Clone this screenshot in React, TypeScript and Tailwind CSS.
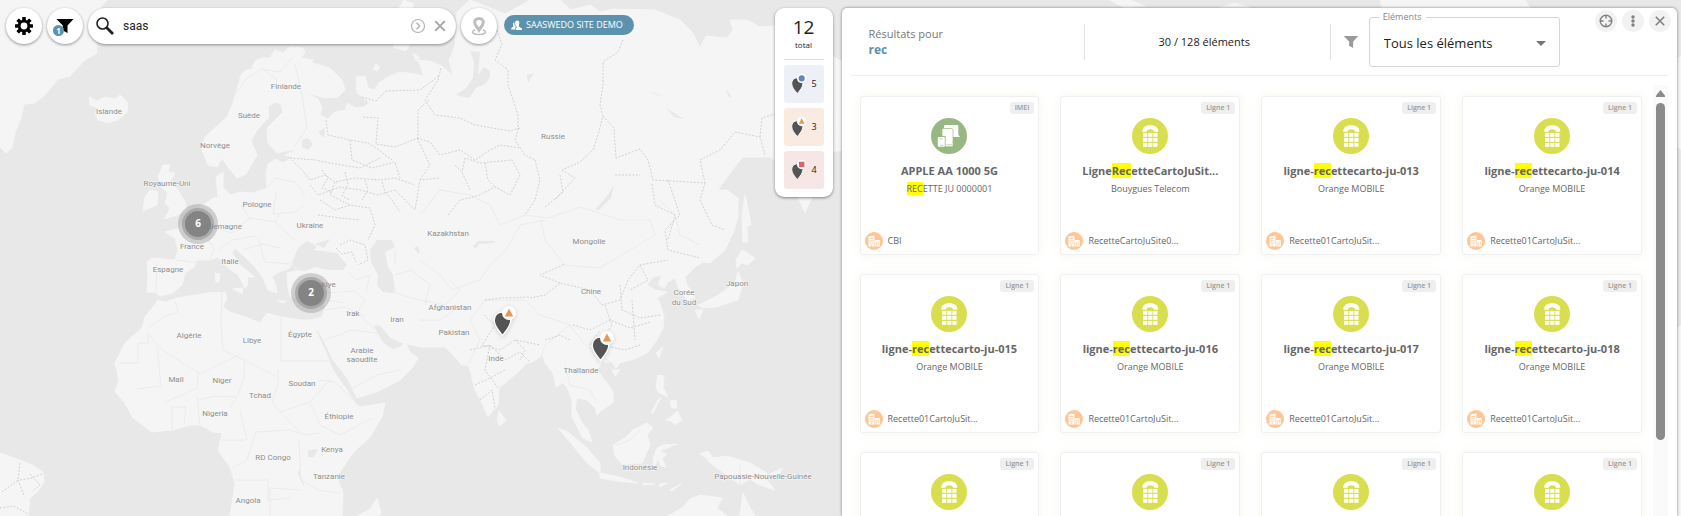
import React, { useState } from 'react';

const LAND = [
  // Greenland
  'M0 0L107 0L100 8L96 20L97 53L85 60L70 76L58 79L45 95L35 103L24 104L21 118L15 133L12 148L6 153L0 147Z',
  // Iceland
  'M89 97L97 101L105 97L115 99L120 95L128 103L127 112L118 120L108 123L98 120L95 113L99 108L90 105Z',
  // Eurasia
  'M241 75L246 70L252 69L255 61L262 58L270 58L275 50L283 53L290 47L303 48L305 53L301 58L313 60L312 63L330 68L342 80L345 90L338 97L325 98L311 94L308 94L318 99L322 108L320 115L328 119L335 112L345 110L347 103L356 108L363 107L370 103L364 98L357 93L356 77L365 76L368 88L374 90L380 82L390 76L400 72L415 74L424 76L418 60L430 61L442 66L453 76L449 61L455 45L457 12L470 0L505 14L525 3L530 0L560 0L571 10L590 5L600 12L612 9L655 10L680 20L693 33L700 48L706 36L727 38L733 30L730 20L747 20L760 27L800 24L820 50L845 63L845 150L830 152L812 197L805 213L798 197L800 175L770 157L743 157L730 173L718 190L727 190L738 198L738 217L733 233L725 250L710 263L703 262L695 267L685 277L687 285L695 298L687 300L678 287L675 278L668 282L664 288L658 285L662 275L653 277L647 285L655 290L667 292L657 298L660 303L664 317L663 328L657 340L648 352L637 358L620 363L616 368L612 362L602 362L597 370L607 383L613 392L613 403L602 410L597 415L595 408L587 400L577 398L575 408L582 423L588 430L592 442L583 438L572 417L572 400L567 387L563 383L556 387L553 373L545 363L543 355L532 362L527 363L517 373L499 388L498 405L488 417L482 403L475 390L470 370L468 365L462 365L455 357L445 347L420 347L400 342L390 337L380 325L373 325L377 333L383 343L393 350L402 346L405 341L410 352L418 358L413 367L400 380L377 392L357 398L353 390L347 378L333 360L325 343L318 330L316 331L325 350L333 370L347 390L355 403L360 407L385 403L382 417L370 437L353 453L340 472L338 480L343 493L342 516L230 516L233 497L235 483L230 467L218 450L222 433L213 432L200 425L190 425L173 430L152 432L133 418L125 403L115 392L119 380L115 363L125 343L142 328L145 317L158 300L165 302L177 298L207 293L225 292L227 298L223 307L230 312L248 318L260 323L267 313L282 317L300 320L310 320L322 317L325 307L325 298L305 299L290 297L288 287L287 273L297 271L292 263L290 268L277 273L272 277L276 285L277 293L268 290L263 278L255 267L245 257L235 248L232 253L240 265L255 277L247 277L248 285L245 288L238 275L227 267L218 257L210 260L197 260L194 267L185 273L182 285L173 293L160 296L155 292L147 292L148 277L147 262L152 258L175 260L178 250L175 238L165 232L177 229L187 222L200 207L213 198L218 197L216 177L223 172L223 187L230 195L240 192L253 193L267 188L266 173L268 164L276 159L283 163L293 157L285 155L300 148L277 153L268 143L267 128L283 112L281 104L275 102L268 107L269 117L257 130L251 141L257 155L250 167L246 174L237 178L228 167L222 158L217 167L208 165L202 150L202 143L207 135L227 117L233 103Z',
  // British Isles
  'M163 165L170 165L168 172L175 173L170 182L178 190L185 202L187 210L177 215L165 219L170 208L165 203L168 193L162 188L158 177Z',
  'M150 190L158 192L157 205L143 211L145 197Z',
  // Mediterranean
  'M233 289L243 288L242 294Z',
  'M215 273L220 274L219 282L216 282Z',
  'M277 301L285 301L284 303Z',
  'M307 304L313 302L311 306Z',
  // Novaya Zemlya
  'M376 64L380 67L377 71L373 69Z',
  'M393 47L402 33L398 10L404 0L414 4L406 20L403 36L410 44L406 51Z',
  'M413 53L420 58L416 61Z',
  // Sakhalin, Japan
  'M745 195L748 208L751 225L747 226L748 242L743 242L742 217Z',
  'M742 250L755 258L748 265L741 263L737 268L736 260Z',
  'M738 272L743 283L738 300L728 303L717 307L703 308L698 305L713 298L723 292L735 283Z',
  'M695 310L703 310L699 319Z',
  // South-east Asia
  'M663 347L659 358L656 353Z',
  'M612 370L620 370L615 376Z',
  'M499 411L506 420L500 426L497 420Z',
  'M658 375L664 376L663 387L668 397L658 392L656 387Z',
  'M666 420L671 417L677 411L682 420L675 425L671 421Z',
  'M670 401L676 400L677 408L672 408Z',
  'M661 397L653 413L651 413L658 400Z',
  'M613 445L625 438L633 430L647 423L653 428L647 435L650 445L642 463L622 464L615 456Z',
  'M657 448L663 445L677 444L667 448L659 451L667 454L662 458L666 467L661 466L658 459L654 468L653 459Z',
  'M558 428L568 432L587 448L600 463L600 473L587 463L570 442Z',
  'M600 473L620 477L638 483L617 481L600 478Z',
  'M643 483L655 484L643 485Z M660 484L667 483L660 487Z M670 490L682 483L672 491Z',
  'M700 454L708 451L713 458L727 456L750 463L767 473L766 479L775 490L757 484L750 479L740 485L727 475L710 463L706 458Z',
  'M770 474L782 468L779 476Z',
  // Australia
  'M668 516L683 507L690 499L700 495L722 498L717 508L727 516Z',
  'M743 493L748 504L755 516L740 516Z',
  // Madagascar
  'M377 498L381 513L379 516L357 516L370 509Z',
  // South America
  'M0 453L20 460L32 465L43 472L44 482L38 491L30 498L28 516L0 516Z',
  // slivers above and beside the results panel
  'M1110 0L1125 8L1145 6L1130 0Z M1220 8L1235 3L1250 8Z M1380 0L1525 0L1530 8L1382 8Z',
  'M1676 60L1681 56L1681 150L1676 145Z M1676 330L1681 325L1681 516L1676 516Z',
];

const WATER = [
  // Black Sea and Azov
  'M297 270L292 263L298 248L307 241L317 246L314 250L322 251L337 253L347 265L343 270L328 270L315 267L305 271Z',
  'M315 244L330 239L324 248Z',
  // Caspian
  'M370 250L377 240L392 240L395 247L385 252L388 267L393 275L395 293L383 292L377 285L378 275L371 262Z',
  // Ob gulf
  'M470 51L474 62L473 78L466 88L456 95L469 98L476 88L485 84L490 77L490 71L484 67L478 75L480 52Z',
  // Baikal, Balkhash, Aral
  'M614 185L611 198L599 210L595 210L607 196Z',
  'M473 246L478 241L495 241L494 243L479 244L475 249Z',
  'M414 248L418 246L420 254L417 252Z',
  // Ladoga, Onega
  'M302 140L308 138L313 144L308 150L302 147Z',
  'M318 132L325 128L324 138Z',
  // African lakes
  'M308 450L318 449L314 457L308 457Z',
  'M299 468L301 477L305 487L303 485L298 474Z',
  // Siberian lakes
  'M527 75L534 73L528 83Z',
  'M666 108L684 119L674 117Z M726 88L732 98L728 96Z M648 91L666 97L657 95Z',
];

const COUNTRIES = [
  'M235 95L246 79L262 69L276 78L278 89M262 69L280 72L293 57M295 64L302 95L307 128L295 146',
  'M222 292L221 325L223 350L239 358L278 377M281 317V361H329M160 348L200 374L239 355M245 358L244 378L238 395L230 408M278 369V384L272 402L280 412L292 408L310 402L330 380M157 347L161 386L137 389M198 373L197 388L180 396L165 402M198 400L215 396L236 397M200 425L197 396M172 430V407L186 407L184 424M148 328L165 316L178 312L175 301M119 363L138 363V343L148 343V333L160 348M256 432L290 430L305 435L320 433M256 432L247 460L232 468M280 412L300 432M318 380L335 382L353 400M310 402L320 425L340 435L372 418M299 440L301 480L318 490L340 493M270 516V488L300 490M235 480H268V500L290 498M240 410L247 440M222 440L245 440',
  'M177 260L205 264M157 264L156 292M210 260L214 248L208 240L215 228M215 228L232 233L250 218L241 205M276 193L273 214L295 212L305 205M250 218L275 222L295 240M243 250L262 244L280 248M258 238L265 262L290 264M218 250L232 240L255 236M267 188L275 178L295 182L305 195M275 222L283 209M325 293L355 291L365 300L357 313L375 330M325 310L345 307L365 316M325 300L345 303M325 340L352 330L377 333M353 388L377 375L400 370',
  'M348 272L356 280L370 275L366 292M395 275L412 270L430 285L425 305M395 265V250M420 300L445 305L460 290L450 280M420 320L440 320L458 308M395 293L420 300M468 365L480 340L470 320L485 300L525 300M420 260L440 275L452 290L480 280L490 265L506 250L520 225L545 220M420 215L440 190L470 195L490 205L500 225L525 215L548 218L580 207L620 220L650 220L655 235L630 250L600 268L565 265L545 240L541 220M660 200L675 215L680 235L700 245M525 300L540 315L570 325L545 345L540 360M570 325L585 345L600 355L610 362M565 365L570 385L590 390L595 400',
  'M740 465V485M615 446L630 440L640 430',
];

const REGIONS = [
  'M441 68L438 80L425 100L435 115L460 118L475 125L510 131L520 128M362 97L376 101L386 91L420 90L440 75M429 100L418 110L418 138L395 147L376 144L378 118L363 117M326 120L328 135L350 140L368 143L376 148L392 160M417 138L430 142L440 155L460 150L475 160L490 150L500 145L520 148M497 30L502 44L495 60L508 70L508 85L518 115L518 130L515 140L525 155L535 160M623 40L618 52L603 62V85L600 105L603 116L598 135L593 150L580 162L562 170M603 116L614 128L616 158L640 149L648 160L653 180L705 183L700 160L720 150L735 132L760 137L765 155M760 137L762 118L775 114M448 215L460 200L480 195L495 187L510 195L520 175L512 160L480 163L465 158L462 172M535 160L540 180L535 200L525 215M560 175L563 192L545 207M615 175H640M652 184L655 205L675 215L668 240M705 183L700 200L712 225L725 230M562 170L575 178L555 200',
  'M292 160L302 170L310 180L325 175L335 182L355 178L380 180L395 178L415 185M290 158L315 160L330 163L360 168L380 158M310 185L318 195L340 187L360 190L378 195L395 190L415 210L420 180L440 178M320 200L335 210L350 205L370 208L375 225L368 240M335 182L330 195L350 205M318 215L340 218L360 220M340 245L350 240L365 245L368 260L358 265M417 138L430 165L420 180M350 140L352 160L372 168L395 162L400 178',
  'M322 170L328 178L322 188L332 192M345 172L348 184L342 196L350 200M365 180L368 190L362 200M382 182L385 192L392 200L400 212M336 248L342 254L352 252L356 262M455 165L462 172L470 190M485 163L488 180L495 187',
  'M530 298L545 295L560 283L590 290L602 305L620 300L628 280L640 265L668 260M560 283L540 275L565 264M573 325L590 330L610 320L630 328L650 322M605 305L612 325L600 345L625 350L640 345M620 285L622 310L640 318L660 315M640 265L648 280L630 290M668 180L680 215L665 230L668 250L700 258M632 300L635 340M590 345L600 330M485 300L500 298L530 297',
  'M484 315L495 325L482 345L500 350L515 340L540 345M470 350L490 345L505 360L520 352L530 362M475 385L490 378L505 370M480 400L492 390L495 408M545 340L560 335L570 340M490 345L485 370L498 388M515 340L525 350L520 360',
  'M2 492L18 480L20 462M0 508L14 506L28 514M20 480L32 478L42 474M30 474L40 485L32 492M18 480L24 495',
];

const LABELS: [string, number, number][] = [
  ['Finlande', 286, 89],
  ['Islande', 109, 114],
  ['Suède', 249, 118],
  ['Norvège', 215, 148],
  ['Russie', 553, 139],
  ['Royaume-Uni', 167, 186],
  ['Pologne', 257, 207],
  ['Allemagne', 223, 229],
  ['Ukraine', 310, 228],
  ['France', 192, 249],
  ['Italie', 230, 264],
  ['Espagne', 168, 272],
  ['Türkiye', 323, 287],
  ['Irak', 353, 316],
  ['Iran', 397, 322],
  ['Algérie', 189, 338],
  ['Libye', 252, 343],
  ['Égypte', 300, 337],
  ['Arabie', 362, 353],
  ['saoudite', 362, 362],
  ['Mali', 176, 382],
  ['Niger', 222, 383],
  ['Soudan', 302, 386],
  ['Tchad', 260, 398],
  ['Nigeria', 215, 416],
  ['Éthiopie', 339, 419],
  ['Kenya', 332, 452],
  ['RD Congo', 273, 460],
  ['Tanzanie', 329, 479],
  ['Angola', 248, 503],
  ['Kazakhstan', 448, 236],
  ['Mongolie', 589, 244],
  ['Chine', 591, 294],
  ['Afghanistan', 450, 310],
  ['Pakistan', 454, 335],
  ['Inde', 496, 361],
  ['Thaïlande', 581, 373],
  ['Corée', 684, 295],
  ['du Sud', 684, 305],
  ['Japon', 737, 286],
  ['Indonésie', 640, 470],
  ['Papouasie-Nouvelle-Guinée', 763, 479],
];

type Shape = 'circle' | 'triangle' | 'square';

type Item = {
  tag: string;
  kind: 'device' | 'line';
  title: string;
  subtitle: string;
  site: string;
};

const line = (n: string): Item => ({
  tag: 'Ligne 1',
  kind: 'line',
  title: `ligne-recettecarto-ju-${n}`,
  subtitle: 'Orange MOBILE',
  site: 'Recette01CartoJuSit...',
});

const ITEMS: Item[] = [
  { tag: 'IMEI', kind: 'device', title: 'APPLE AA 1000 5G', subtitle: 'RECETTE JU 0000001', site: 'CBI' },
  {
    tag: 'Ligne 1',
    kind: 'line',
    title: 'LigneRecetteCartoJuSit...',
    subtitle: 'Bouygues Telecom',
    site: 'RecetteCartoJuSite0...',
  },
  ...['013', '014', '015', '016', '017', '018', '019', '020', '021', '022'].map(line),
];

const STATS: { shape: Shape; count: number; bg: string }[] = [
  { shape: 'circle', count: 5, bg: 'bg-[#edf1f7]' },
  { shape: 'triangle', count: 3, bg: 'bg-[#faebe0]' },
  { shape: 'square', count: 4, bg: 'bg-[#f6e6e6]' },
];

function WorldMap() {
  return (
    <svg
      className="absolute inset-0 h-full w-full"
      viewBox="0 0 1681 516"
      preserveAspectRatio="xMinYMin slice"
      role="img"
      aria-label="Carte du monde"
    >
      <rect width="1681" height="516" fill="#e8e8e8" />
      {LAND.map((d) => (
        <path key={d} d={d} fill="#f5f5f5" stroke="#f5f5f5" strokeLinejoin="round" />
      ))}
      {WATER.map((d) => (
        <path key={d} d={d} fill="#e8e8e8" />
      ))}
      <g fill="none" strokeLinejoin="round">
        {COUNTRIES.map((d) => (
          <path key={d} d={d} stroke="#eaeaea" strokeWidth="0.9" />
        ))}
        {REGIONS.map((d) => (
          <path key={d} d={d} stroke="#c8c8c8" strokeWidth="0.8" strokeDasharray="2 1.5" />
        ))}
      </g>
      <g
        className="font-['Roboto',sans-serif] text-[8px]"
        fill="#8c8c8c"
        stroke="#f8f8f8"
        strokeWidth="1.2"
        paintOrder="stroke"
        textAnchor="middle"
      >
        {LABELS.map(([name, x, y]) => (
          <text key={name} x={x} y={y}>
            {name}
          </text>
        ))}
      </g>
    </svg>
  );
}

function PinIcon({ shape, className }: { shape: Shape; className?: string }) {
  return (
    <svg viewBox="0 0 26 34" className={className} aria-hidden="true">
      <path
        d="M10.500 7C5.500 7 2.200 10.500 2.200 15.500C2.200 21 6.500 25.500 10.500 30.500C14.500 25.500 18.800 21 18.800 15.500C18.800 10.500 15.500 7 10.500 7Z"
        fill="#545454"
        stroke="#fff"
        strokeWidth="1.4"
      />
      <circle cx="17" cy="8" r="7" fill="#fff" />
      {shape === 'circle' && <circle cx="17" cy="8" r="4.500" fill="#5f86c0" />}
      {shape === 'triangle' && <path d="M17 3.500L21.200 11.500H12.800Z" fill="#ee9550" />}
      {shape === 'square' && <rect x="13" y="4" width="8" height="8" fill="#d9636b" />}
    </svg>
  );
}

function Cluster({ count, className }: { count: number; className: string }) {
  return (
    <button
      type="button"
      className={`absolute grid size-10 place-items-center rounded-full bg-[#888]/35 ${className}`}
    >
      <span className="grid size-8 place-items-center rounded-full bg-[#888]/50">
        <span className="grid size-[26px] place-items-center rounded-full bg-[#7f7f7f]/90 pb-0.5 text-[10px] leading-3 font-bold text-white">
          {count}
        </span>
      </span>
    </button>
  );
}

function GearIcon() {
  return (
    <svg viewBox="0 0 18 18" className="size-[18px]" aria-hidden="true">
      {[0, 45, 90, 135].map((a) => (
        <rect key={a} x="7.200" y="0" width="3.600" height="18" rx="0.500" transform={`rotate(${a} 9 9)`} />
      ))}
      <circle cx="9" cy="9" r="6.300" />
      <circle cx="9" cy="9" r="3.400" fill="#fff" />
    </svg>
  );
}

function FunnelIcon({ className }: { className?: string }) {
  return (
    <svg viewBox="0 0 18 14" className={className} fill="currentColor" aria-hidden="true">
      <path d="M0.500 0H17.500L11.500 6.500V14L6.800 11.500V6.500Z" />
    </svg>
  );
}

function DeviceIcon() {
  return (
    <svg viewBox="0 0 36 36" className="size-9" aria-hidden="true">
      <circle cx="18" cy="18" r="18" fill="#98b783" />
      <path d="M13 9C13 7.500 13.500 7 14.500 7H26C27 7 27.300 7.500 27.300 8.500V16.800L29 19H21V11H13Z" fill="#fff" />
      <path d="M12.500 10.500H20.500C21.500 10.500 22 11 22 12V28.700H14.200V18.300H11V12C11 11 11.500 10.500 12.500 10.500Z" fill="#fff" stroke="#98b783" strokeWidth="0.700" />
      <rect x="6.800" y="19" width="7" height="9.700" rx="1" fill="#fff" />
      <path d="M8.500 20.800H12M15.500 26.700H21M9 27.300H12" stroke="#98b783" strokeWidth="0.600" />
    </svg>
  );
}

function PhoneIcon() {
  return (
    <svg viewBox="0 0 36 36" className="size-9" aria-hidden="true">
      <circle cx="18" cy="18" r="18" fill="#d8de4d" />
      <path d="M10.300 13.800C9.800 10 13 7.300 18.300 7.300S26.800 10 26.300 13.800H22C22 12.100 20.700 11.200 18.300 11.200S14.600 12.100 14.600 13.800Z" fill="#fff" />
      <g fill="#fff">
        {[11.1, 16.2, 21.3].map((x) =>
          [14.9, 19.9, 24.9].map((y) => <rect key={`${x}-${y}`} x={x} y={y} width="4.200" height="3.900" />),
        )}
      </g>
    </svg>
  );
}

function BuildingIcon() {
  return (
    <svg viewBox="0 0 18 18" className="size-[18px] shrink-0" aria-hidden="true">
      <circle cx="9" cy="9" r="9" fill="#ffc594" />
      <path d="M3.500 4.500L9.500 3.500V14.500H3.500ZM10 8H14.800V14.500H10Z" fill="#fff" />
      <path d="M4.500 6.500H8.500M4.500 8.800H8.500M4.500 11H8.500M6.300 12.300V14.500M11.200 9.800V14.500M13.200 9.800V13" stroke="#ffc594" strokeWidth="0.800" />
    </svg>
  );
}

function Highlight({ text, query }: { text: string; query: string }) {
  const at = text.toLowerCase().indexOf(query);
  if (at < 0) return <>{text}</>;
  return (
    <>
      {text.slice(0, at)}
      <mark className="bg-[#ff0] text-inherit">{text.slice(at, at + query.length)}</mark>
      {text.slice(at + query.length)}
    </>
  );
}

function Toolbar() {
  const [search, setSearch] = useState('saas');
  const round =
    'relative grid size-9 shrink-0 place-items-center rounded-full bg-white shadow-[0_1px_3px_rgba(0,0,0,0.4)]';

  return (
    <div className="flex min-w-0 items-start gap-[5px] pl-1.5">
      <button type="button" aria-label="Paramètres" className={round}>
        <GearIcon />
      </button>
      <button type="button" aria-label="Filtres" className={round}>
        <FunnelIcon className="h-3.5 w-[18px]" />
        <span className="absolute bottom-2 left-1.5 grid size-[11px] place-items-center rounded-full bg-[#5d92ae] text-[8px] leading-none font-bold text-white">
          1
        </span>
      </button>
      <form
        role="search"
        onSubmit={(e) => e.preventDefault()}
        className="flex h-9 w-[368px] min-w-0 items-center rounded-full bg-white pr-2.5 pl-2 shadow-[0_1px_3px_rgba(0,0,0,0.4)]"
      >
        <svg viewBox="0 0 18 18" className="size-[18px] shrink-0" fill="none" stroke="#222" aria-hidden="true">
          <circle cx="6.500" cy="6.500" r="5.500" strokeWidth="1.600" />
          <path d="M10.500 10.500L17 17" strokeWidth="2.800" />
        </svg>
        <input
          type="text"
          aria-label="Rechercher"
          value={search}
          onChange={(e) => setSearch(e.target.value)}
          className="ml-[9px] min-w-0 flex-1 font-['Roboto',sans-serif] text-[12px] text-[#222] outline-none"
        />
        <button type="submit" aria-label="Lancer la recherche" className="mr-2">
          <svg viewBox="0 0 16 16" className="size-4" fill="none" stroke="#b3b3b3" aria-hidden="true">
            <circle cx="8" cy="8" r="6.500" strokeWidth="1.200" />
            <path d="M6.500 4.800L9.700 8L6.500 11.200" strokeWidth="1.500" />
          </svg>
        </button>
        <button type="button" aria-label="Effacer" onClick={() => setSearch('')}>
          <svg viewBox="0 0 12 12" className="size-3" stroke="#a3a3a3" strokeWidth="1.700" aria-hidden="true">
            <path d="M1.200 1.200L10.800 10.800M10.800 1.200L1.200 10.800" />
          </svg>
        </button>
      </form>
      <button type="button" aria-label="Localiser" className={round}>
        <svg viewBox="0 0 16 20" className="h-5 w-4" fill="none" stroke="#bdbdbd" aria-hidden="true">
          <path
            d="M8 2.500C5.300 2.500 3.700 4.300 3.700 6.400C3.700 9 6.300 11.200 8 14C9.700 11.200 12.300 9 12.300 6.400C12.300 4.300 10.700 2.500 8 2.500Z"
            strokeWidth="3"
          />
          <path d="M4 14C0 15 0.500 18.500 8 18.500S16 15 12 14" strokeWidth="1.500" />
        </svg>
      </button>
      <span className="mt-[7px] ml-0.5 flex h-5 shrink-0 items-center gap-1 rounded-full bg-[#5d92ae] pr-[11px] pl-[7px] text-[9px] font-medium whitespace-nowrap text-white">
        <svg viewBox="0 0 11 11" className="size-[11px]" fill="#fff" aria-hidden="true">
          <path d="M6.200 0.500C8.300 0.500 8.600 2.300 8.200 4C7.900 5.300 7.600 6.200 8 6.800L11 8.500V10H4.800V8.300L6 7C4.800 6 4 4.500 4 3C4 1.500 4.800 0.500 6.200 0.500Z" />
          <path d="M3.200 2.200C1.800 2.500 1.500 4.500 2.600 6.200L0.300 8V9.500H4.200V7.800L5 7C3.800 5.800 3.200 4 3.200 2.200Z" />
        </svg>
        SAASWEDO SITE DEMO
      </span>
    </div>
  );
}

function Legend() {
  return (
    <aside className="flex w-[58px] shrink-0 flex-col gap-[5px] self-start rounded-[9px] bg-white px-[9px] pt-[9px] pb-2 shadow-[0_1px_3px_rgba(0,0,0,0.45)]">
      <div className="flex h-[43px] flex-col items-center border-b border-[#ddd] text-[#222]">
        <span className="text-[19px] leading-5">12</span>
        <span className="mt-0.5 text-[8px] leading-3">total</span>
      </div>
      {STATS.map((s) => (
        <button
          type="button"
          key={s.shape}
          className={`flex h-[38px] items-center justify-center gap-[3px] rounded-[3px] text-[9px] text-[#222] ${s.bg}`}
        >
          <PinIcon shape={s.shape} className="h-[23px] w-[18px]" />
          {s.count}
        </button>
      ))}
    </aside>
  );
}

function ResultCard({ item }: { item: Item }) {
  return (
    <article className="flex h-[159px] min-w-0 flex-col rounded-[3px] border border-[#f0f0f0] bg-white px-1 pt-[5px] pb-1 text-[#666] shadow-[0_0_10px_rgba(190,190,140,0.16)]">
      <span className="h-3 self-end rounded-[3px] bg-[#efefef] px-[5px] text-[7px] leading-3 font-semibold text-[#999]">
        {item.tag}
      </span>
      <div className="mt-1 flex flex-col items-center">
        {item.kind === 'device' ? <DeviceIcon /> : <PhoneIcon />}
        <h3 className="mt-2 text-[11px] leading-[18px] font-bold whitespace-nowrap">
          <Highlight text={item.title} query="rec" />
        </h3>
        <p className="text-[9px] leading-[18px]">
          <Highlight text={item.subtitle} query="rec" />
        </p>
      </div>
      <div className="mt-auto flex items-center gap-[5px] text-[9px]">
        <BuildingIcon />
        {item.site}
      </div>
    </article>
  );
}

function ResultsPanel() {
  const action = 'grid size-[22px] place-items-center rounded-full bg-[#f2f2f2] text-[#808080]';

  return (
    <section className="flex h-full min-w-0 flex-col rounded-t-[5px] bg-white px-[9px] shadow-[0_0_3px_rgba(0,0,0,0.5)]">
      <header className="grid h-[68px] shrink-0 grid-cols-[233fr_247fr_337fr] items-center border-b border-[#eee]">
        <div className="pl-[18px] text-[11px] leading-4 text-[#777]">
          Résultats pour
          <div className="text-[12px] font-bold text-[#5d92ae]">rec</div>
        </div>
        <div className="flex h-9 items-center justify-center border-x border-[#e3e3e3] pt-0.5 pr-1.5 text-[11px] text-[#222]">
          30 / 128 éléments
        </div>
        <div className="flex h-full items-center pl-3">
          <FunnelIcon className="h-3 w-4 shrink-0 text-[#999]" />
          <div className="relative ml-2.5 h-[50px] w-[191px]">
            <label
              htmlFor="elements"
              className="absolute -top-1.5 left-2.5 bg-white px-1 text-[9px] leading-3 text-[#888]"
            >
              Eléments
            </label>
            <select
              id="elements"
              className="h-full w-full appearance-none rounded-[3px] border border-[#d6d6d6] bg-transparent pt-1 pl-3.5 text-[13px] text-[#222] outline-none"
            >
              <option>Tous les éléments</option>
            </select>
            <svg
              viewBox="0 0 10 5"
              className="pointer-events-none absolute top-6 right-3.5 h-[5px] w-2.5"
              fill="#777"
              aria-hidden="true"
            >
              <path d="M0 0H10L5 5Z" />
            </svg>
          </div>
          <div className="-mr-[3px] ml-auto flex gap-[5px] self-start pt-0.5">
            <button type="button" aria-label="Centrer" className={action}>
              <svg viewBox="0 0 14 14" className="size-3.5" fill="none" stroke="currentColor" aria-hidden="true">
                <circle cx="7" cy="7" r="5.800" strokeWidth="1.400" />
                <path d="M7 1V4.500M7 9.500V13M1 7H4.500M9.500 7H13" strokeWidth="1.400" />
              </svg>
            </button>
            <button type="button" aria-label="Plus d'options" className={action}>
              <svg viewBox="0 0 4 12" className="h-3 w-1" fill="currentColor" aria-hidden="true">
                <circle cx="2" cy="2" r="1.700" />
                <circle cx="2" cy="6" r="1.700" />
                <circle cx="2" cy="10" r="1.700" />
              </svg>
            </button>
            <button type="button" aria-label="Fermer" className={action}>
              <svg viewBox="0 0 10 10" className="size-2.5" stroke="currentColor" strokeWidth="1.600" aria-hidden="true">
                <path d="M0.800 0.800L9.200 9.200M9.200 0.800L0.800 9.200" />
              </svg>
            </button>
          </div>
        </div>
      </header>
      <div className="mt-[9px] flex min-h-0 flex-1">
        <div className="grid min-w-0 flex-1 grid-cols-4 content-start gap-x-[21px] gap-y-[19px] overflow-hidden pt-[11px] pr-[11px] pl-[9px]">
          {ITEMS.map((item) => (
            <ResultCard key={item.title} item={item} />
          ))}
        </div>
        <div className="flex w-[15px] shrink-0 flex-col items-center bg-[#fafafa] pt-[5px]">
          <svg viewBox="0 0 9 7" className="h-[7px] w-[9px]" fill="#8b8b8b" aria-hidden="true">
            <path d="M4.500 0L9 5.500V7H0V5.500Z" />
          </svg>
          <div className="mt-1.5 h-[79%] w-[9px] rounded-full bg-[#8b8b8b]" />
        </div>
      </div>
    </section>
  );
}

export default function App() {
  return (
    <div className="relative h-screen overflow-hidden bg-[#e8e8e8] font-['Open_Sans',sans-serif]">
      <WorldMap />
      <Cluster count={6} className="top-[204px] left-[178px]" />
      <Cluster count={2} className="top-[273px] left-[291px]" />
      <PinIcon shape="triangle" className="absolute top-[305px] left-[492px] h-[34px] w-[26px] drop-shadow-sm" />
      <PinIcon shape="triangle" className="absolute top-[330px] left-[590px] h-[34px] w-[26px] drop-shadow-sm" />
      <main className="relative flex h-full pt-2">
        <div className="flex min-w-0 flex-1 justify-between pr-2">
          <Toolbar />
          <Legend />
        </div>
        <div className="w-1/2 shrink-0 pr-1 pl-px">
          <ResultsPanel />
        </div>
      </main>
    </div>
  );
}
